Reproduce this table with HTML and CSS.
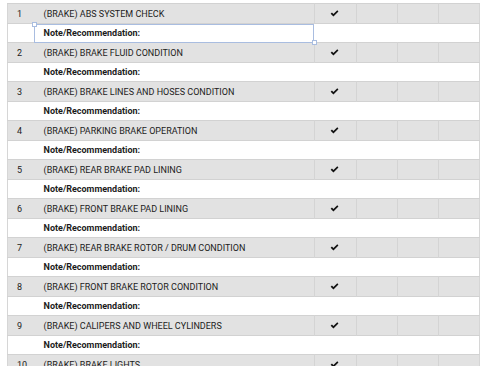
FILE: index.html
```html
<!DOCTYPE html>
<html>
<head>
<meta charset="utf-8">
<link rel="stylesheet" href="styles.css">
</head>
<body>
<svg width="0" height="0" class="defs" aria-hidden="true">
  <symbol id="tick" viewBox="0 0 10 8">
    <path d="M0.6 4.3 L2.1 2.9 L3.8 4.5 L8.2 0.4 L9.5 1.8 L3.8 7.3 Z" fill="#111"/>
  </symbol>
</svg>
<div class="sheet">
<table class="grid">
  <colgroup>
    <col class="c-num"><col class="c-desc"><col class="c-ok"><col class="c-x"><col class="c-x"><col class="c-x">
  </colgroup>
  <tbody>
    <tr class="item"><td class="num">1</td><td class="desc">(BRAKE) ABS SYSTEM CHECK</td><td class="mark"><svg class="tick"><use href="#tick"/></svg></td><td></td><td></td><td></td></tr>
    <tr class="note"><td></td><td class="note-cell selected">Note/Recommendation:<span class="h h-tl"></span><span class="h h-br"></span></td><td colspan="4"></td></tr>
    <tr class="item"><td class="num">2</td><td class="desc">(BRAKE) BRAKE FLUID CONDITION</td><td class="mark"><svg class="tick"><use href="#tick"/></svg></td><td></td><td></td><td></td></tr>
    <tr class="note"><td></td><td class="note-cell">Note/Recommendation:</td><td colspan="4"></td></tr>
    <tr class="item"><td class="num">3</td><td class="desc">(BRAKE) BRAKE LINES AND HOSES CONDITION</td><td class="mark"><svg class="tick"><use href="#tick"/></svg></td><td></td><td></td><td></td></tr>
    <tr class="note"><td></td><td class="note-cell">Note/Recommendation:</td><td colspan="4"></td></tr>
    <tr class="item"><td class="num">4</td><td class="desc">(BRAKE) PARKING BRAKE OPERATION</td><td class="mark"><svg class="tick"><use href="#tick"/></svg></td><td></td><td></td><td></td></tr>
    <tr class="note"><td></td><td class="note-cell">Note/Recommendation:</td><td colspan="4"></td></tr>
    <tr class="item"><td class="num">5</td><td class="desc">(BRAKE) REAR BRAKE PAD LINING</td><td class="mark"><svg class="tick"><use href="#tick"/></svg></td><td></td><td></td><td></td></tr>
    <tr class="note"><td></td><td class="note-cell">Note/Recommendation:</td><td colspan="4"></td></tr>
    <tr class="item"><td class="num">6</td><td class="desc">(BRAKE) FRONT BRAKE PAD LINING</td><td class="mark"><svg class="tick"><use href="#tick"/></svg></td><td></td><td></td><td></td></tr>
    <tr class="note"><td></td><td class="note-cell">Note/Recommendation:</td><td colspan="4"></td></tr>
    <tr class="item"><td class="num">7</td><td class="desc">(BRAKE) REAR BRAKE ROTOR / DRUM CONDITION</td><td class="mark"><svg class="tick"><use href="#tick"/></svg></td><td></td><td></td><td></td></tr>
    <tr class="note"><td></td><td class="note-cell">Note/Recommendation:</td><td colspan="4"></td></tr>
    <tr class="item"><td class="num">8</td><td class="desc">(BRAKE) FRONT BRAKE ROTOR CONDITION</td><td class="mark"><svg class="tick"><use href="#tick"/></svg></td><td></td><td></td><td></td></tr>
    <tr class="note"><td></td><td class="note-cell">Note/Recommendation:</td><td colspan="4"></td></tr>
    <tr class="item"><td class="num">9</td><td class="desc">(BRAKE) CALIPERS AND WHEEL CYLINDERS</td><td class="mark"><svg class="tick"><use href="#tick"/></svg></td><td></td><td></td><td></td></tr>
    <tr class="note"><td></td><td class="note-cell">Note/Recommendation:</td><td colspan="4"></td></tr>
    <tr class="item"><td class="num">10</td><td class="desc">(BRAKE) BRAKE LIGHTS</td><td class="mark"><svg class="tick"><use href="#tick"/></svg></td><td></td><td></td><td></td></tr>
  </tbody>
</table>
</div>
</body>
</html>
```

FILE: styles.css
```css
html, body {
  margin: 0;
  padding: 0;
  background: #fff;
}

.defs {
  position: absolute;
  width: 0;
  height: 0;
}

.sheet {
  padding: 3px 0 0 7px;
  font-family: Roboto, "Liberation Sans", sans-serif;
  font-size: 9px;
  color: #1c1c1c;
}

.grid {
  border-collapse: collapse;
  table-layout: fixed;
  width: 473px;
  border-left: 1px solid #d6d6d6;
  border-right: 1px solid #d6d6d6;
}

.c-num { width: 26px; }
.c-desc { width: 280px; }
.c-ok { width: 42px; }
.c-x { width: 41px; }

.grid td {
  padding: 0;
  white-space: nowrap;
  overflow: visible;
  border-top: 1px solid #d2d2d2;
}

.item td {
  height: 19px;
  background: #e2e2e2;
}

.item td + td + td,
.item td:nth-child(2) {
  border-right: 1px solid #d4d4d4;
}

.item td:last-child {
  border-right: none;
}

.note td {
  height: 18px;
  background: #fff;
}

.num {
  padding-left: 9px !important;
}

.desc,
.note-cell {
  padding-left: 10px !important;
}

.note-cell {
  font-weight: 700;
  position: relative;
}

.mark {
  text-align: center;
  line-height: 0;
}

.tick {
  width: 9px;
  height: 7px;
  margin-left: -2px;
  vertical-align: middle;
}

/* active cell outline with its two drag handles */
.selected {
  outline: 1px solid #a9bde0;
  outline-offset: -1px;
}

.h {
  position: absolute;
  width: 3px;
  height: 3px;
  background: #fff;
  border: 1px solid #a9bde0;
}

.h-tl { left: -2px; top: -2px; }
.h-br { right: -3px; bottom: -3px; }
```
